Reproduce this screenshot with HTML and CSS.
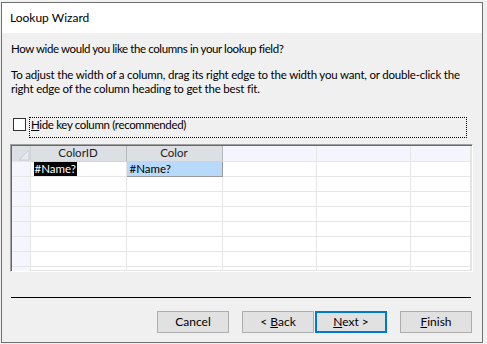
FILE: index.html
```html
<!DOCTYPE html>
<html lang="en">

<head>
    <meta charset="UTF-8">
    <title>Lookup Wizard</title>
    <link rel="stylesheet" href="styles.css">
</head>

<body>
    <div class="window">
        <div class="title-bar">Lookup Wizard</div>
        <div class="wizard-body">
            <p class="intro">How wide would you like the columns in your lookup field?</p>
            <p class="hint">To adjust the width of a column, drag its right edge to the width you want, or double-click the<br>right edge of the column heading to get the best fit.</p>

            <div class="check-row">
                <span class="check-box"></span>
                <label class="check-label"><u>H</u>ide key column (recommended)</label>
            </div>

            <div class="grid-frame">
                <table class="grid">
                    <colgroup>
                        <col class="col-sel">
                        <col class="col-a">
                        <col class="col-b">
                        <col class="col-c">
                        <col class="col-d">
                        <col>
                    </colgroup>
                    <thead>
                        <tr>
                            <th class="corner">
                                <svg width="12" height="12" viewBox="0 0 12 12">
                                    <polygon points="1,11 11,1 11,11" fill="#e8eaed" stroke="#c9cdd3" stroke-width="1"/>
                                </svg>
                            </th>
                            <th class="hd">ColorID</th>
                            <th class="hd">Color</th>
                            <th class="hd-empty"></th>
                            <th class="hd-empty"></th>
                            <th class="hd-empty"></th>
                        </tr>
                    </thead>
                    <tbody id="grid-body">
                        <tr>
                            <td class="sel"></td>
                            <td><span class="picked">#Name?</span></td>
                            <td class="current">#Name?</td>
                            <td></td>
                            <td></td>
                            <td></td>
                        </tr>
                    </tbody>
                </table>
            </div>

            <div class="divider"></div>

            <div class="buttons">
                <button class="btn">Cancel</button>
                <button class="btn gap">&lt; <u>B</u>ack</button>
                <button class="btn default"><u>N</u>ext &gt;</button>
                <button class="btn gap"><u>F</u>inish</button>
            </div>
        </div>
    </div>
    <script>
        // filler rows for the empty part of the grid
        let gridBody = document.querySelector("#grid-body");
        for (let i = 0; i < 7; i++) {
            gridBody.innerHTML += `
                <tr>
                    <td class="sel"></td>
                    <td></td><td></td><td></td><td></td><td></td>
                </tr>`;
        }
    </script>
</body>

</html>
```

FILE: styles.css
```css
* {
    box-sizing: border-box;
}

body {
    margin: 0;
    background-color: #f0f0f0;
    font-family: "Lato", "Liberation Sans", sans-serif;
    font-size: 11.5px;
    color: #000;
}

.window {
    margin: 2px 0 0 1px;
    width: 482px;
    height: 341px;
    border: 1px solid #6f6f6f;
    background-color: #f0f0f0;
    display: flex;
    flex-direction: column;
}

.title-bar {
    height: 30px;
    background-color: #fff;
    padding: 0 0 0 8px;
    line-height: 30px;
    font-size: 12px;
}

.wizard-body {
    padding: 9px 0 0 9px;
}

.intro,
.hint {
    margin: 0;
    line-height: 14px;
    white-space: nowrap;
    letter-spacing: -0.2px;
}

.intro {
    letter-spacing: -0.4px;
}

.hint {
    margin-top: 12px;
}

.check-row {
    margin-top: 21px;
    display: flex;
    align-items: flex-start;
    height: 21px;
}

.check-box {
    width: 13px;
    height: 13px;
    margin: 1px 3px 0 2px;
    border: 1px solid #333;
    background-color: #fff;
}

.check-label {
    flex: 1;
    height: 21px;
    margin-right: 15px;
    border: 1px dotted #000;
    line-height: 13px;
    padding-left: 1px;
    letter-spacing: -0.35px;
}

.check-label u,
.btn u {
    text-decoration-thickness: 1px;
    text-underline-offset: 1px;
}

.grid-frame {
    margin: 6px 0 0 -1px;
    width: 463px;
    height: 128px;
    border: 1px solid;
    border-color: #a0a0a0 #fff #fff #a0a0a0;
    box-shadow: inset 1px 1px 0 #696969, inset -1px -1px 0 #e3e3e3;
    padding: 1px 1px 1px 1px;
    overflow: hidden;
    background-color: #fff;
}

.grid {
    border-collapse: collapse;
    table-layout: fixed;
    width: 459px;
    font-size: 11.5px;
}

.col-sel {
    width: 18px;
}

.col-a,
.col-b {
    width: 96px;
}

.col-c,
.col-d {
    width: 94px;
}

.grid th,
.grid td {
    height: 15px;
    padding: 0;
    border-right: 1px solid #e6e6e6;
    border-bottom: 1px solid #e6e6e6;
    font-weight: normal;
    line-height: 14px;
    white-space: nowrap;
    overflow: hidden;
}

.grid th.corner {
    background-color: #dcdfe3;
    text-align: right;
    vertical-align: bottom;
    line-height: 0;
    border-right: 1px solid #cfd2d6;
}

.grid th.hd {
    background-color: #dcdfe3;
    color: #222;
    border-right: 1px solid #b5b8bc;
    border-bottom: 1px solid #cfd2d6;
}

.grid th.hd-empty {
    background-color: #f5f6fd;
}

.grid td.sel {
    background-color: #f5f6fd;
}

.picked {
    display: inline-block;
    margin-left: 3px;
    padding: 0 1px;
    background-color: #000;
    color: #fff;
}

.grid td.current {
    background-color: #b9d9fb;
    padding-left: 3px;
    border-right: 1px solid #9a9a9a;
    border-bottom: 1px solid #9a9a9a;
}

.divider {
    margin: 25px 0 0 0;
    width: 460px;
    border-top: 1px solid #000;
}

.buttons {
    display: flex;
    margin: 13px 0 0 146px;
}

.btn {
    width: 72px;
    height: 22px;
    padding: 0;
    font-family: inherit;
    font-size: 12px;
    line-height: 18px;
    color: #000;
    background-color: #e1e1e1;
    border: 1px solid #adadad;
}

.btn.gap {
    margin-left: 13px;
}

.btn.default {
    margin-left: 1px;
    border: 2px solid #0078d7;
}
```
